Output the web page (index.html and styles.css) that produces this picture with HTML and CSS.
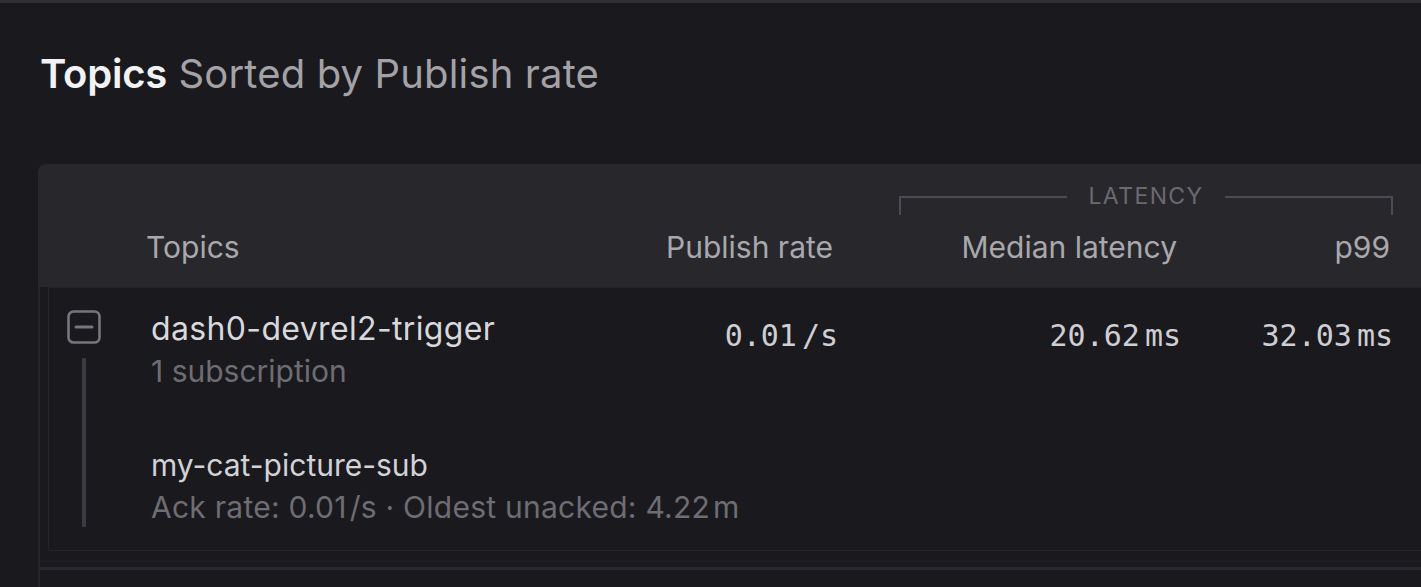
FILE: index.html
```html
<!DOCTYPE html>
<html lang="en">
<head>
<meta charset="utf-8">
<title>Topics</title>
<link rel="stylesheet" href="styles.css">
</head>
<body>
<div class="topbar"></div>
<h1 class="title"><span class="title-strong">Topics</span> Sorted by Publish rate</h1>

<div class="table">
  <div class="thead">
    <div class="latency-group">
      <span class="seg seg-left"></span>
      <span class="latency-label">LATENCY</span>
      <span class="seg seg-right"></span>
    </div>
    <div class="th th-topics">Topics</div>
    <div class="th th-num th-publish">Publish rate</div>
    <div class="th th-num th-median">Median latency</div>
    <div class="th th-num th-p99">p99</div>
  </div>

  <div class="tbody">
    <div class="row">
      <div class="cell-icon">
        <svg class="toggle" width="34" height="34" viewBox="0 0 34 34" aria-hidden="true">
          <rect x="1.5" y="1.5" width="31" height="31" rx="5" fill="none" stroke="#77767c" stroke-width="2.6"/>
          <line x1="9" y1="17" x2="25" y2="17" stroke="#77767c" stroke-width="3" stroke-linecap="round"/>
        </svg>
        <div class="tree-line"></div>
      </div>
      <div class="cell-topic">
        <div class="topic-name">dash0-devrel2-trigger</div>
        <div class="muted sub-count">1 subscription</div>
        <div class="sub-name">my-cat-picture-sub</div>
        <div class="muted sub-meta">Ack rate: 0.01<span class="unit">/s</span> · Oldest unacked: 4.22<span class="unit">m</span></div>
      </div>
      <div class="cell-num"><span>0.01</span><span class="munit">/s</span></div>
      <div class="cell-num"><span>20.62</span><span class="munit">ms</span></div>
      <div class="cell-num"><span>32.03</span><span class="munit">ms</span></div>
    </div>
    <div class="divider"></div>
    <div class="divider-strong"></div>
    <div class="next-row"></div>
  </div>
</div>
</body>
</html>
```

FILE: styles.css
```css
html, body {
  margin: 0;
  padding: 0;
  background: #1a191e;
  overflow: hidden;
  height: 587px;
  font-family: "Inter", "Noto Sans", sans-serif;
}

.topbar {
  height: 3px;
  background: #2f2e33;
}

.title {
  margin: 47px 0 0 40px;
  font-size: 40px;
  line-height: 48px;
  font-weight: 400;
  color: #a3a2a7;
  letter-spacing: 0.15px;
  white-space: nowrap;
}

.title-strong {
  font-weight: 600;
  color: #f2f2f4;
  letter-spacing: -0.2px;
}

.table {
  margin: 66px 0 0 38px;
  width: 1402px;
  border-left: 2px solid #26252a;
  border-top-left-radius: 9px;
}

.thead {
  display: grid;
  grid-template-columns: 106px 466px 226px 343px 212px;
  grid-template-rows: 31px 36px;
  row-gap: 14px;
  padding: 20px 47px 22px 0;
  background: #28272c;
  border-top-left-radius: 8px;
  margin-left: -2px;
  padding-left: 2px;
}

.latency-group {
  grid-column: 4 / 6;
  grid-row: 1;
  margin-left: 61px;
  display: flex;
  align-items: flex-start;
}

.seg {
  flex: 1;
  height: 17px;
  margin-top: 12px;
  border-top: 2px solid #4c4b51;
}

.seg-left {
  border-left: 2px solid #4c4b51;
}

.seg-right {
  border-right: 2px solid #4c4b51;
}

.latency-label {
  padding: 0 21px;
  font-size: 23px;
  line-height: 24px;
  letter-spacing: 1.4px;
  color: #6b6a70;
}

.th {
  grid-row: 2;
  font-size: 30px;
  line-height: 36px;
  color: #a9a8ad;
  white-space: nowrap;
}

.th-topics { grid-column: 2; }
.th-publish { grid-column: 3; margin-right: 5px; }
.th-median { grid-column: 4; margin-right: 4px; }
.th-p99 { grid-column: 5; margin-right: 3px; }

.th-num {
  text-align: right;
}

.row {
  margin-left: 8px;
  display: grid;
  grid-template-columns: 102px 461px 226px 343px 212px;
  padding: 22px 47px 23px 0;
  border: 1px solid #25242a;
  border-right: none;
}

.cell-icon {
  display: flex;
  flex-direction: column;
  padding-left: 18px;
}

.toggle {
  display: block;
}

.tree-line {
  width: 4px;
  height: 169px;
  margin: 14px 0 0 15px;
  background: #3c3b41;
  border-radius: 1px;
}

.cell-topic {
  white-space: nowrap;
}

.topic-name {
  font-size: 32px;
  line-height: 38px;
  letter-spacing: 0.35px;
  color: #d9d8dd;
}

.muted {
  color: #6e6d73;
}

.sub-count {
  margin-top: 5px;
  font-size: 30px;
  line-height: 36px;
}

.sub-name {
  margin-top: 58px;
  font-size: 30px;
  line-height: 36px;
  color: #d3d2d7;
}

.sub-meta {
  margin-top: 6px;
  font-size: 30px;
  line-height: 36px;
  letter-spacing: 0.25px;
}

.unit {
  margin-left: 3px;
}

.cell-num {
  display: flex;
  justify-content: flex-end;
  align-items: flex-start;
  padding-top: 7px;
  font-family: "DejaVu Sans Mono", "Liberation Mono", monospace;
  font-size: 30px;
  line-height: 38px;
  color: #cfced3;
  white-space: nowrap;
}

.munit {
  margin-left: 5px;
}

.divider {
  margin-top: 10px;
  height: 1px;
  background: #232227;
}

.divider-strong {
  margin-top: 5px;
  height: 3px;
  background: #29282e;
}

.next-row {
  height: 40px;
}
```
